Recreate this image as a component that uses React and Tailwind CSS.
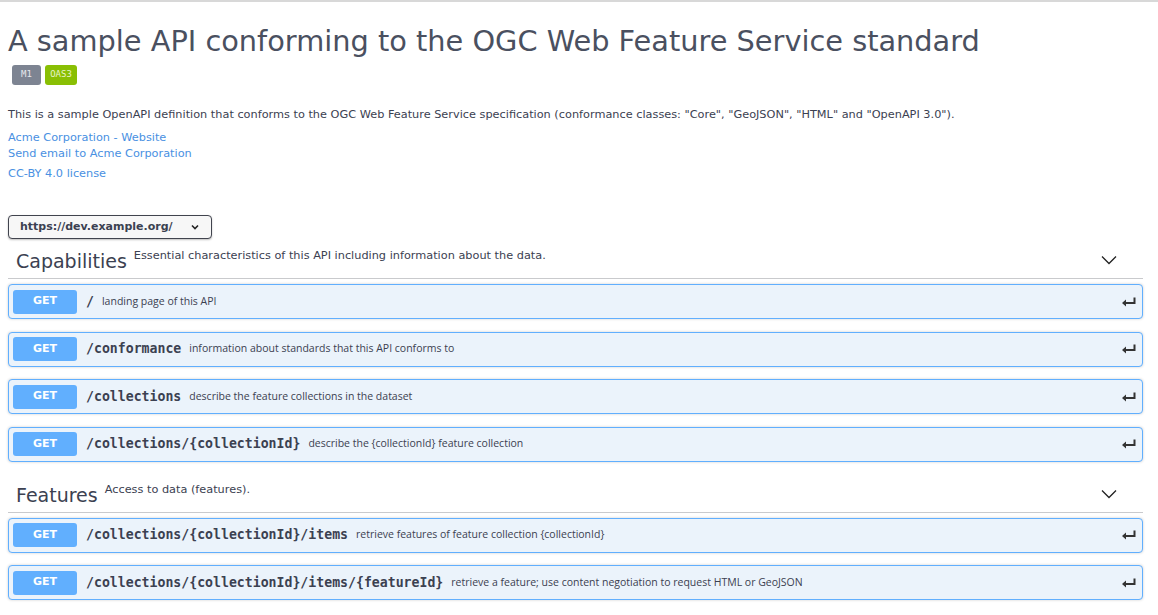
import { useState } from 'react';

const sections = [
  {
    name: 'Capabilities',
    description: 'Essential characteristics of this API including information about the data.',
    ops: [
      { path: '/', summary: 'landing page of this API' },
      { path: '/conformance', summary: 'information about standards that this API conforms to' },
      { path: '/collections', summary: 'describe the feature collections in the dataset' },
      { path: '/collections/{collectionId}', summary: 'describe the {collectionId} feature collection' },
    ],
  },
  {
    name: 'Features',
    description: 'Access to data (features).',
    ops: [
      { path: '/collections/{collectionId}/items', summary: 'retrieve features of feature collection {collectionId}' },
      { path: '/collections/{collectionId}/items/{featureId}', summary: 'retrieve a feature; use content negotiation to request HTML or GeoJSON' },
    ],
  },
];

function Chevron() {
  return (
    <svg width="16" height="10" viewBox="0 0 16 10" fill="none" stroke="#222" strokeWidth="1.3">
      <path d="M1 1.5 L8 8.5 L15 1.5" />
    </svg>
  );
}

function EnterArrow() {
  return (
    <svg width="14" height="10" viewBox="0 0 14 10" fill="#333">
      <path d="M11.5 0.5 H13.5 V7 H4 V9.5 L0 6 L4 2.5 V5 H11.5 Z" />
    </svg>
  );
}

function Operation({ op }) {
  return (
    <div className="flex items-center h-[35px] border border-[#61affe] bg-[#ebf3fb] rounded-[4px] shadow-[0_0_3px_rgba(0,0,0,0.19)] pl-[4px] pr-[6px]">
      <span className="w-[64px] h-[24px] rounded-[3px] bg-[#61affe] text-white text-[11px] font-bold flex items-center justify-center font-['DejaVu_Sans',sans-serif]">
        GET
      </span>
      <span className="ml-[9px] font-['DejaVu_Sans_Mono',monospace] font-bold text-[13.2px] text-[#3b4151]">
        {op.path}
      </span>
      <span className="ml-[8px] font-['Open_Sans',sans-serif] text-[10.5px] text-[#3b4151] flex-1">
        {op.summary}
      </span>
      <EnterArrow />
    </div>
  );
}

function TagSection({ section }) {
  const [open] = useState(true);
  return (
    <div>
      <div className="flex items-start border-b border-[#c9cacd] pl-[8px] pr-[26px] h-[40px] pt-[10px]">
        <span className="text-[19px] leading-[24px] text-[#3b4151]">{section.name}</span>
        <span className="ml-[7px] text-[11.3px] leading-[14px] text-[#3b4151]">{section.description}</span>
        <span className="ml-auto mt-[6px]"><Chevron /></span>
      </div>
      {open && (
        <div className="flex flex-col gap-[12.5px] pt-[5px]">
          {section.ops.map((op) => (
            <Operation key={op.path} op={op} />
          ))}
        </div>
      )}
    </div>
  );
}

export default function App() {
  return (
    <div className="min-h-screen bg-white border-t-2 border-[#d8d8d8] font-['DejaVu_Sans',sans-serif] text-[#3b4151]">
      <div className="pl-[8px] pr-[15px]">
        {/* title */}
        <div className="pt-[20px]">
          <h1 className="text-[28.8px] leading-[38px] text-[#4a5060] font-normal">
            A sample API conforming to the OGC Web Feature Service standard
          </h1>
          <div className="flex gap-[4px] mt-[5px] ml-[4px]">
            <span className="h-[20px] w-[29px] rounded-[3px] bg-[#7d8492] text-[#e6e8ec] text-[9px] flex items-center justify-center font-['DejaVu_Sans_Mono',monospace]">M1</span>
            <span className="h-[20px] w-[32px] rounded-[3px] bg-[#89bf04] text-[#e8f4c9] text-[9px] flex items-center justify-center font-['DejaVu_Sans_Mono',monospace]">OAS3</span>
          </div>
        </div>

        {/* description */}
        <p className="mt-[23px] text-[11.3px] leading-[14px]">
          This is a sample OpenAPI definition that conforms to the OGC Web Feature Service specification (conformance classes: "Core", "GeoJSON", "HTML" and "OpenAPI 3.0").
        </p>
        <div className="mt-[8px] flex flex-col text-[11.3px] leading-[16px] text-[#4990e2]">
          <a href="#">Acme Corporation - Website</a>
          <a href="#">Send email to Acme Corporation</a>
        </div>
        <div className="mt-[4px] text-[11.3px] leading-[16px] text-[#4990e2]">
          <a href="#">CC-BY 4.0 license</a>
        </div>

        {/* server select */}
        <div className="mt-[33px] w-[204px] h-[24px] border border-[#41444e] rounded-[4px] shadow-[0_1px_2px_rgba(0,0,0,0.25)] flex items-center pl-[11px] pr-[12px] bg-[#f7f7f7]">
          <span className="text-[11px] font-bold text-[#3b4151] flex-1">https://dev.example.org/</span>
          <svg width="8" height="6" viewBox="0 0 8 6" fill="none" stroke="#222" strokeWidth="1.6">
            <path d="M1 1.5 L4 4.5 L7 1.5" />
          </svg>
        </div>

        {/* tags */}
        <div className="flex flex-col gap-[11px]">
          {sections.map((s) => (
            <TagSection key={s.name} section={s} />
          ))}
        </div>
      </div>
    </div>
  );
}
